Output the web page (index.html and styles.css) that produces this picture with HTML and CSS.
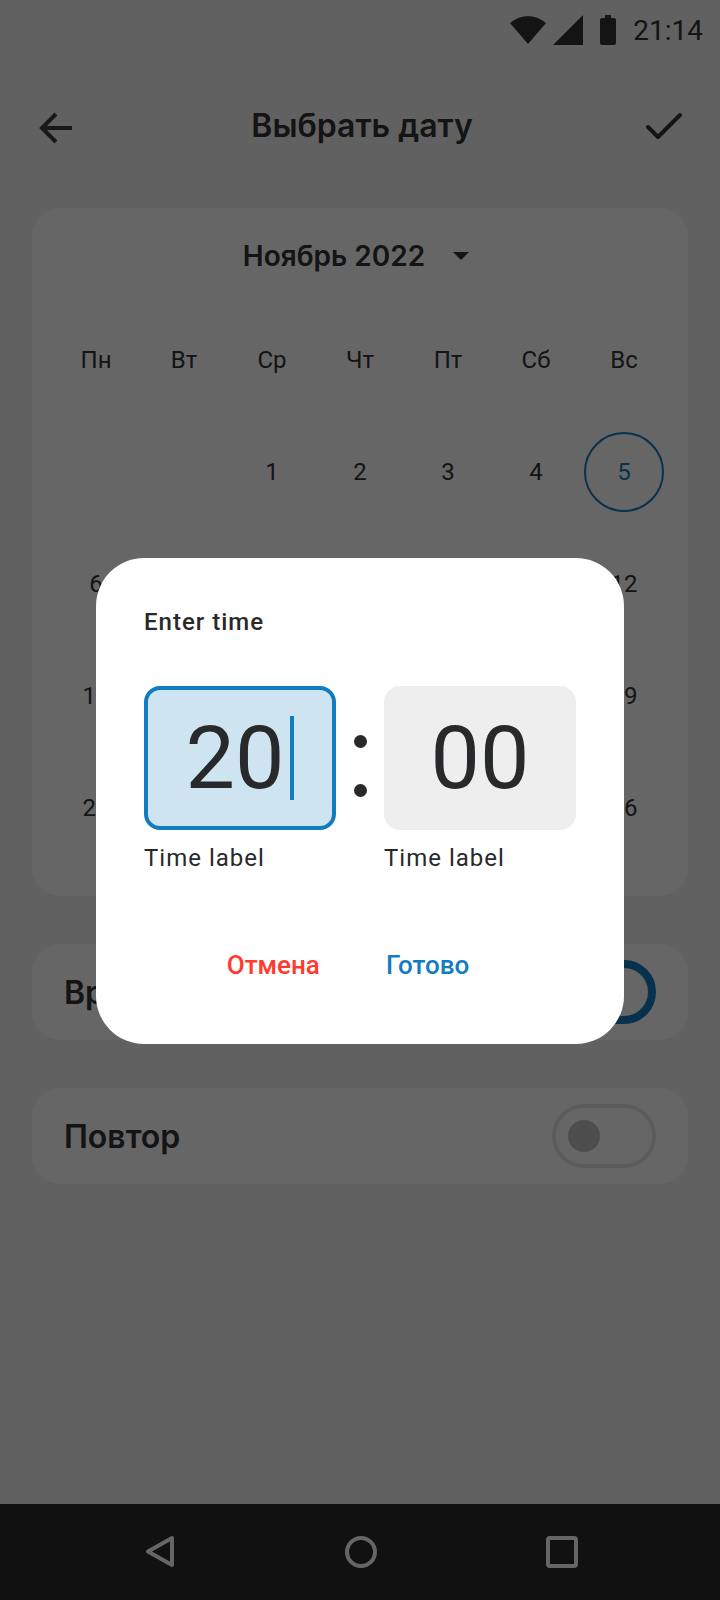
FILE: index.html
```html
<!DOCTYPE html>
<html lang="ru">
<head>
<meta charset="utf-8">
<title>Выбрать дату</title>
<link rel="stylesheet" href="styles.css">
</head>
<body>
<div class="screen">
  <div class="status">
    <svg class="st-wifi" width="36" height="28" viewBox="0 0 36 28"><path d="M0 7Q18-7 36 7L18 28Z"/></svg>
    <svg class="st-signal" width="30" height="30" viewBox="0 0 30 30"><path d="M0 30L30 0V30Z"/></svg>
    <svg class="st-battery" width="16" height="30" viewBox="0 0 16 30"><path d="M5 0H11V3H14Q16 3 16 5V28Q16 30 14 30H2Q0 30 0 28V5Q0 3 2 3H5Z"/></svg>
    <span class="st-time">21:14</span>
  </div>

  <header class="header">
    <svg class="icon-back" width="40" height="40" viewBox="0 0 40 40"><path d="M36 22H7M20 8L6 22L20 36"/></svg>
    <h1 class="title">Выбрать дату</h1>
    <svg class="icon-check" width="48" height="48" viewBox="0 0 48 48"><path d="M8 25L18 35L40 13"/></svg>
  </header>

  <main class="content">
    <section class="card calendar">
      <div class="month">
        <span class="month-name">Ноябрь 2022</span>
        <svg width="16" height="8" viewBox="0 0 16 8"><path d="M0 0H16L8 8Z"/></svg>
      </div>
      <div class="grid">
        <span class="cell">Пн</span><span class="cell">Вт</span><span class="cell">Ср</span><span class="cell">Чт</span><span class="cell">Пт</span><span class="cell">Сб</span><span class="cell">Вс</span>
        <span class="cell"></span><span class="cell"></span><span class="cell">1</span><span class="cell">2</span><span class="cell">3</span><span class="cell">4</span><span class="cell"><span class="today">5</span></span>
        <span class="cell">6</span><span class="cell">7</span><span class="cell">8</span><span class="cell">9</span><span class="cell">10</span><span class="cell">11</span><span class="cell">12</span>
        <span class="cell">13</span><span class="cell">14</span><span class="cell">15</span><span class="cell">16</span><span class="cell">17</span><span class="cell">18</span><span class="cell">19</span>
        <span class="cell">20</span><span class="cell">21</span><span class="cell">22</span><span class="cell">23</span><span class="cell">24</span><span class="cell">25</span><span class="cell">26</span>
      </div>
    </section>

    <section class="card row">
      <span class="row-label">Время</span>
      <span class="toggle toggle-on"></span>
    </section>

    <section class="card row">
      <span class="row-label">Повтор</span>
      <span class="toggle"><span class="knob"></span></span>
    </section>
  </main>

  <nav class="nav">
    <svg width="40" height="40" viewBox="0 0 40 40"><path d="M32 6L8 19.500L32 33Z"/></svg>
    <svg width="40" height="40" viewBox="0 0 40 40"><circle cx="20" cy="20" r="14"/></svg>
    <svg width="40" height="40" viewBox="0 0 40 40"><rect x="6" y="6" width="28" height="28" rx="2"/></svg>
  </nav>

  <div class="overlay">
    <div class="dialog">
      <div class="dialog-title">Enter time</div>
      <div class="time-row">
        <div class="time-col">
          <div class="field field-active"><span class="digits">20</span><span class="caret"></span></div>
          <div class="time-label">Time label</div>
        </div>
        <div class="colon"><span class="dot"></span><span class="dot"></span></div>
        <div class="time-col">
          <div class="field"><span class="digits">00</span></div>
          <div class="time-label">Time label</div>
        </div>
      </div>
      <div class="actions">
        <span class="btn btn-cancel">Отмена</span>
        <span class="btn btn-ok">Готово</span>
      </div>
    </div>
  </div>
</div>
</body>
</html>
```
FILE: styles.css
```css
* { box-sizing: border-box; }
html, body { margin: 0; padding: 0; }
body { font-family: Roboto, "Liberation Sans", sans-serif; color: #323232; }

.screen {
  position: relative;
  width: 720px;
  height: 1600px;
  display: flex;
  flex-direction: column;
  background: #f3f3f3;
  overflow: hidden;
}

/* status bar */
.status {
  height: 60px;
  display: flex;
  align-items: flex-start;
  justify-content: flex-end;
  padding: 15px 17px 0 0;
}
.status svg { display: block; fill: #323232; }
.st-wifi { margin-top: 1px; margin-right: 7px; }
.st-signal { margin-right: 17px; }
.st-battery { margin-right: 17px; }
.st-time { font-size: 28px; line-height: 32px; color: #323232; }

/* header */
.header {
  height: 132px;
  display: grid;
  grid-template-columns: 1fr auto 1fr;
  align-items: center;
  padding: 0 32px 0 36px;
  margin-bottom: 16px;
}
.title {
  margin: 0;
  font-family: Inter, sans-serif;
  font-size: 32px;
  font-weight: 600;
  line-height: 40px;
  color: #323232;
}
.icon-back { fill: none; stroke: #3c3c44; stroke-width: 4; }
.icon-check {
  justify-self: end;
  fill: none;
  stroke: #323232;
  stroke-width: 4;
  stroke-linecap: round;
  stroke-linejoin: round;
}

/* cards */
.content {
  flex: 1;
  display: flex;
  flex-direction: column;
  gap: 48px;
  padding: 0 32px;
}
.card { background: #fff; border-radius: 28px; }

.calendar { height: 688px; padding: 0 20px; }
.month {
  height: 96px;
  display: flex;
  align-items: center;
  justify-content: center;
  gap: 28px;
  padding-right: 8px;
}
.month-name {
  font-family: Inter, sans-serif;
  font-size: 28px;
  font-weight: 600;
  line-height: 36px;
}
.month svg { fill: #323232; display: block; }

.grid {
  display: grid;
  grid-template-columns: repeat(7, 88px);
  grid-auto-rows: 112px;
}
.cell {
  display: flex;
  align-items: center;
  justify-content: center;
  font-size: 24px;
  color: #323232;
}
.today {
  width: 80px;
  height: 80px;
  display: flex;
  align-items: center;
  justify-content: center;
  border: 2px solid #127cc0;
  border-radius: 50%;
  color: #127cc0;
}

.row {
  height: 96px;
  display: flex;
  align-items: center;
  justify-content: space-between;
  padding: 0 32px;
}
.row-label {
  font-family: Inter, sans-serif;
  font-size: 32px;
  font-weight: 600;
  color: #323232;
}
.toggle {
  width: 104px;
  height: 64px;
  display: flex;
  align-items: center;
  padding-left: 12px;
  border: 4px solid #e6e6e6;
  border-radius: 32px;
}
.toggle-on { border: 8px solid #127cc0; }
.knob {
  width: 32px;
  height: 32px;
  border-radius: 50%;
  background: #c0c0c0;
}

/* navigation bar */
.nav {
  height: 96px;
  display: flex;
  align-items: center;
  justify-content: space-between;
  padding: 0 138px 0 140px;
  background: #2b2b2b;
}
.nav svg {
  display: block;
  fill: none;
  stroke: #fff;
  stroke-width: 4;
  stroke-linejoin: round;
}

/* dialog */
.overlay {
  position: absolute;
  inset: 0;
  display: flex;
  align-items: center;
  justify-content: center;
  padding-top: 2px;
  background: rgba(0, 0, 0, 0.6);
}
.dialog {
  width: 528px;
  padding: 48px 48px 55px;
  background: #fff;
  border-radius: 48px;
  color: #28292b;
}
.dialog-title {
  font-size: 24px;
  font-weight: 500;
  line-height: 32px;
  letter-spacing: 1px;
  margin-bottom: 48px;
}
.time-row {
  display: grid;
  grid-template-columns: 192px 1fr 192px;
}
.field {
  height: 144px;
  display: flex;
  align-items: center;
  justify-content: center;
  gap: 6px;
  background: #eeeeee;
  border-radius: 16px;
}
.field-active {
  background: #cfe4f1;
  border: 4px solid #127cc0;
}
.digits { font-size: 88px; line-height: 1; color: #28292b; }
.caret { width: 4px; height: 84px; background: #127cc0; }
.time-label {
  margin-top: 12px;
  font-size: 24px;
  line-height: 32px;
  letter-spacing: 1px;
  color: #28292b;
}
.colon {
  height: 144px;
  display: flex;
  flex-direction: column;
  align-items: center;
  justify-content: center;
  gap: 36px;
  padding-top: 15px;
}
.dot {
  width: 13px;
  height: 13px;
  border-radius: 50%;
  background: #28292b;
}
.actions {
  display: flex;
  justify-content: center;
  gap: 66px;
  margin-top: 67px;
  padding-right: 24px;
}
.btn { font-size: 26px; font-weight: 500; line-height: 48px; }
.btn-cancel { color: #ff3b30; }
.btn-ok { color: #127cc0; }
```
